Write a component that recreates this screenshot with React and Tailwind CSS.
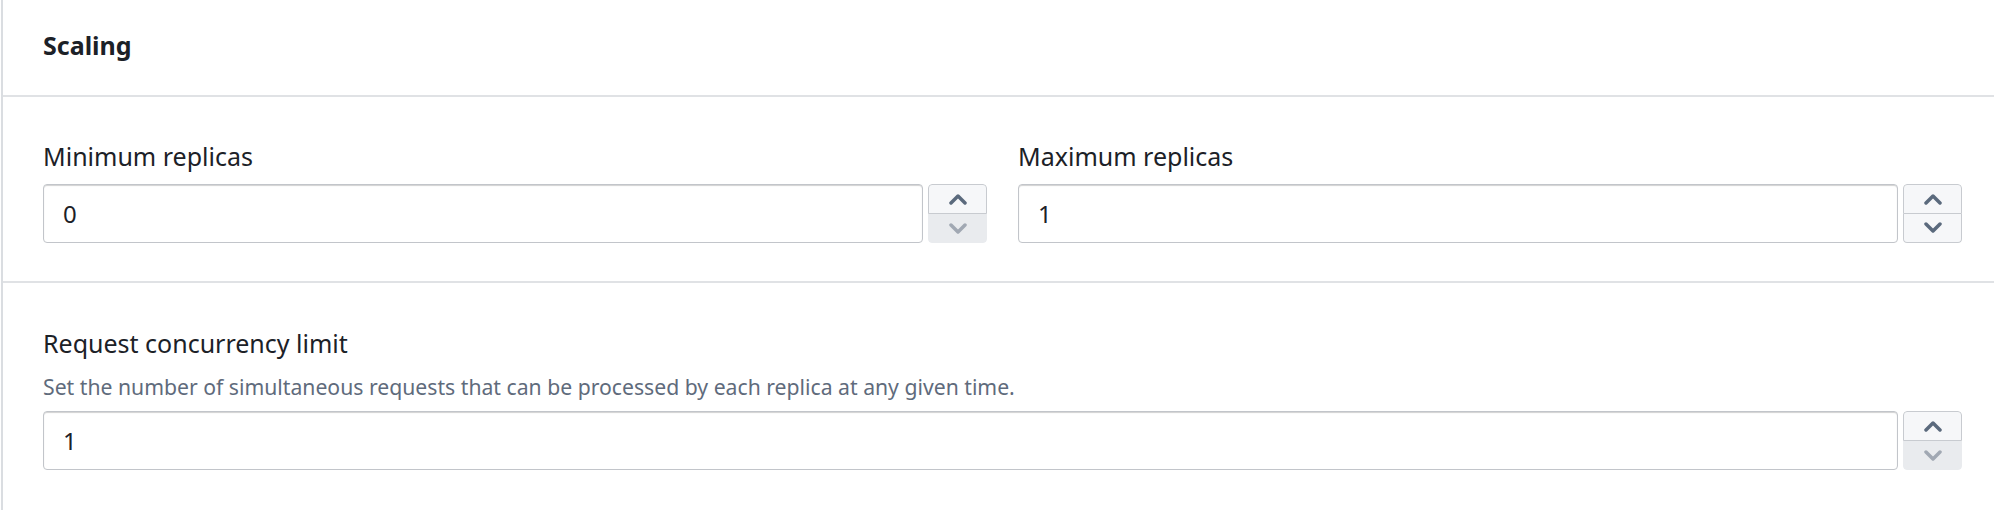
import React, { useState } from 'react';

const Chevron = ({ dir, disabled }) => (
  <svg width="20" height="12" viewBox="0 0 20 12" fill="none">
    <polyline
      points={dir === 'up' ? '3,10 10,3 17,10' : '3,2 10,9 17,2'}
      stroke={disabled ? '#a1a8b3' : '#5b6a7d'}
      strokeWidth="3.5"
      strokeLinecap="round"
      strokeLinejoin="round"
    />
  </svg>
);

const NumberInput = ({ value, min = 0, onChange }) => {
  const downDisabled = value <= min;

  return (
    <div className="flex gap-[5px]">
      <input
        value={value}
        onChange={(e) => onChange(Number(e.target.value) || 0)}
        className="h-[59px] flex-1 min-w-0 rounded-[4px] border border-[#c2c5ca] bg-white pl-[19px] text-[24px] text-[#1c2127] shadow-[inset_0_1px_1px_rgba(0,0,0,0.18)] outline-none"
      />
      <div className="flex h-[59px] w-[59px] flex-col overflow-hidden rounded-[4px]">
        <button
          onClick={() => onChange(value + 1)}
          className="flex h-[30px] items-center justify-center rounded-t-[4px] border border-[#c8cbd0] bg-[#f6f7f9] shadow-[0_1px_1px_rgba(0,0,0,0.08)]"
        >
          <Chevron dir="up" />
        </button>
        <button
          onClick={() => !downDisabled && onChange(value - 1)}
          className={`flex flex-1 items-center justify-center rounded-b-[4px] ${
            downDisabled
              ? 'bg-[#e9ebee]'
              : 'border border-t-0 border-[#c8cbd0] bg-[#f6f7f9] shadow-[0_1px_1px_rgba(0,0,0,0.08)]'
          }`}
        >
          <Chevron dir="down" disabled={downDisabled} />
        </button>
      </div>
    </div>
  );
};

export default function App() {
  const [minReplicas, setMinReplicas] = useState(0);
  const [maxReplicas, setMaxReplicas] = useState(1);
  const [concurrency, setConcurrency] = useState(1);

  return (
    <div
      className="h-[510px] w-full overflow-hidden bg-white"
      style={{ fontFamily: '"Noto Sans", Lato, sans-serif' }}
    >
      <div className="ml-[1px] h-full border-l-2 border-[#dadde1]">
        {/* Header */}
        <div className="flex h-[97px] items-center border-b-2 border-[#e0e2e5] pb-[3px] pl-[40px] pr-[32px]">
          <h2 className="text-[25px] font-bold text-[#1c2127]">Scaling</h2>
        </div>

        {/* Replicas */}
        <div className="grid grid-cols-2 gap-x-[31px] border-b-2 border-[#e0e2e5] pb-[38px] pl-[40px] pr-[32px] pt-[41px]">
          <div>
            <label className="mb-[10px] block text-[25px] leading-[36px] text-[#1c2127]">Minimum replicas</label>
            <NumberInput value={minReplicas} onChange={setMinReplicas} />
          </div>
          <div>
            <label className="mb-[10px] block text-[25px] leading-[36px] text-[#1c2127]">Maximum replicas</label>
            <NumberInput value={maxReplicas} onChange={setMaxReplicas} />
          </div>
        </div>

        {/* Concurrency */}
        <div className="pl-[40px] pr-[32px] pt-[42px]">
          <label className="block text-[25px] leading-[36px] text-[#1c2127]">Request concurrency limit</label>
          <p className="mb-[9px] mt-[11px] text-[21.2px] leading-[30px] text-[#5f6b7c]">
            Set the number of simultaneous requests that can be processed by each replica at any given time.
          </p>
          <NumberInput value={concurrency} min={1} onChange={setConcurrency} />
        </div>
      </div>
    </div>
  );
}
